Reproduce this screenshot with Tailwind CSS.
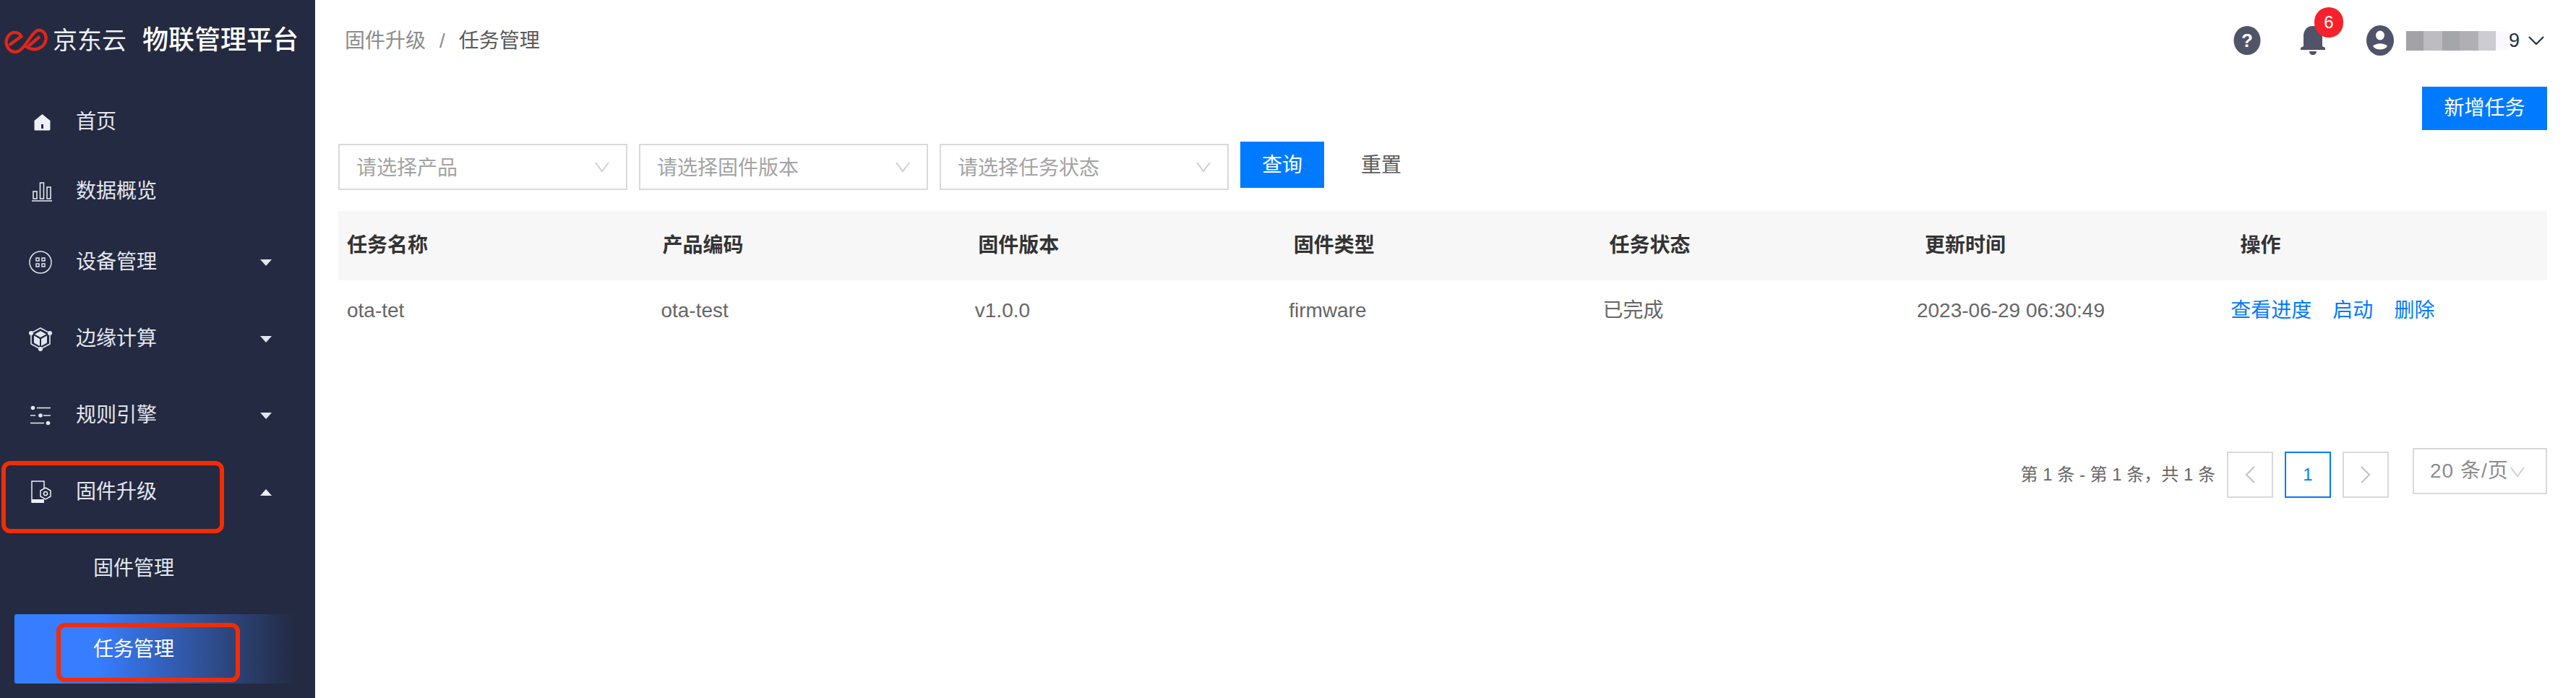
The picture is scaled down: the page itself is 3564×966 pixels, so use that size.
<!DOCTYPE html>
<html lang="zh-CN">
<head>
    <meta charset="UTF-8">
    <title>任务管理</title>
    <script src="https://cdn.jsdelivr.net/npm/@tailwindcss/browser@4"></script>
</head>
<body class="bg-white font-['Liberation_Sans','Noto_Sans_CJK_SC',sans-serif] overflow-hidden">
    <div class="flex w-[3564px] h-[966px]">
        <!-- sidebar -->
        <aside class="w-[436px] shrink-0 bg-[#232a41] text-[28px] text-[#e3e6ef]">
            <div class="flex items-center h-[112px] pl-[6px]">
                <svg width="60" height="36" viewBox="18 113 180 107" fill="none" stroke="#e1251b" stroke-width="13" class="shrink-0">
                    <path d="M38 186 L88 150 C78 128 45 125 30 155 C15 190 45 222 75 212 C105 200 120 150 150 128 C170 115 195 135 190 165 C185 195 150 212 120 198 L105 190"/>
                    <path d="M118 190 L165 150"/>
                </svg>
                <span class="ml-[7px] text-[34px] leading-none text-[#eef0f4]">京东云</span>
                <span class="ml-[22px] text-[36px] leading-none font-medium text-white">物联管理平台</span>
            </div>
            <nav class="mt-[9px]">
                <a class="flex items-center h-[96px]">
                    <svg class="ml-[47px] w-[23px] h-[23px]" viewBox="0 0 23 23"><path fill="#eef0f7" d="M11.5 0 L22.5 9 V21 a1.5 1.5 0 0 1 -1.5 1.5 H2 a1.5 1.5 0 0 1 -1.5 -1.5 V9 Z"/><rect x="10" y="14" width="3" height="6" fill="#232a41"/></svg>
                    <span class="ml-[35px]">首页</span>
                </a>
                <a class="flex items-center h-[96px]">
                    <svg class="ml-[44px] w-[28px] h-[28px]" viewBox="0 0 28 28" fill="none" stroke="#e3e6ef" stroke-width="1.6"><rect x="2" y="14" width="5" height="10"/><rect x="11.500" y="2" width="5" height="22"/><rect x="21" y="8" width="5" height="16"/><path d="M0 27 H28"/></svg>
                    <span class="ml-[33px]">数据概览</span>
                </a>
                <a class="flex items-center h-[96px] mt-[2px]">
                    <svg class="ml-[40px] w-[32px] h-[32px]" viewBox="0 0 32 32" fill="none" stroke="#e3e6ef" stroke-width="1.5"><circle cx="16" cy="16" r="15"/><rect x="10" y="10" width="4" height="4"/><rect x="18" y="10" width="4" height="4"/><rect x="10" y="18" width="4" height="4"/><rect x="18" y="18" width="4" height="4"/></svg>
                    <span class="ml-[33px]">设备管理</span>
                    <svg class="ml-[143px] w-[16px] h-[9px]" viewBox="0 0 16 9"><path fill="#e3e6ef" d="M0 0 H16 L8 9 Z"/></svg>
                </a>
                <a class="flex items-center h-[96px] mt-[10px]">
                    <svg class="ml-[40px] w-[32px] h-[34px]" viewBox="0 0 32 34" fill="none" stroke="#e3e6ef" stroke-width="1.6"><path d="M16 2 L29 9 V24 L16 31 L3 24 V9 Z"/><path fill="#e3e6ef" stroke="none" d="M16 6 L24 10.500 L16 15 L8 10.500 Z"/><path fill="#e3e6ef" stroke="none" d="M7 12.500 L15 17 V27 L7 22.500 Z M25 12.500 L17 17 V27 L25 22.500 Z"/><circle cx="16" cy="31" r="2.300" fill="#e3e6ef"/><circle cx="3" cy="9" r="2.300" fill="#e3e6ef"/><circle cx="29" cy="9" r="2.300" fill="#e3e6ef"/></svg>
                    <span class="ml-[33px]">边缘计算</span>
                    <svg class="ml-[143px] w-[16px] h-[9px]" viewBox="0 0 16 9"><path fill="#e3e6ef" d="M0 0 H16 L8 9 Z"/></svg>
                </a>
                <a class="flex items-center h-[96px] mt-[10px]">
                    <svg class="ml-[42px] w-[28px] h-[28px]" viewBox="0 0 28 28" fill="none" stroke="#e3e6ef" stroke-width="1.6"><circle cx="3.500" cy="3.500" r="2.800" fill="#e3e6ef" stroke="none"/><path d="M9 3.500 H28"/><path d="M0 14 H7 M18 14 H28"/><circle cx="14" cy="14" r="2.800" fill="#e3e6ef" stroke="none"/><path d="M0 24.500 H19"/><circle cx="24.500" cy="24.500" r="2.800" fill="#e3e6ef" stroke="none"/></svg>
                    <span class="ml-[35px]">规则引擎</span>
                    <svg class="ml-[143px] w-[16px] h-[9px]" viewBox="0 0 16 9"><path fill="#e3e6ef" d="M0 0 H16 L8 9 Z"/></svg>
                </a>
                <a class="relative flex items-center h-[96px] mt-[10px]">
                    <svg class="ml-[43px] w-[29px] h-[32px]" viewBox="0 0 29 32" fill="none" stroke="#eef0f7" stroke-width="1.500"><path d="M18 14 V1 H1 V30 H18"/><rect x="1" y="26" width="17" height="5" fill="#eef0f7" stroke="none"/><path fill="#232a41" d="M20 10 L27 14 V22 L20 26 L13 22 V14 Z"/><circle cx="20" cy="18" r="2.600"/></svg>
                    <span class="ml-[33px]">固件升级</span>
                    <svg class="ml-[143px] w-[16px] h-[9px]" viewBox="0 0 16 9"><path fill="#eef0f7" d="M0 9 H16 L8 0 Z"/></svg>
                    <div class="absolute left-[2px] top-[5px] w-[308px] h-[100px] rounded-[12px] border-[6px] border-[#f62b00]"></div>
                </a>
                <a class="flex items-center h-[96px] mt-[10px] pl-[129px]">固件管理</a>
                <a class="relative flex items-center h-[96px] mt-[15px] ml-[20px] w-[390px] pl-[109px] pt-[2px] rounded-[3px] text-white bg-gradient-to-r from-[#377dff] from-[30%] to-[#232a41]">
                    任务管理
                    <div class="absolute left-[58px] top-[12px] w-[254px] h-[82px] rounded-[12px] border-[6px] border-[#f62b00]"></div>
                </a>
            </nav>
        </aside>

        <!-- content -->
        <main class="flex-1 min-w-0 pl-[32px] pr-[40px] text-[28px] text-[#666]">
            <header class="flex items-center h-[112px]">
                <div class="flex items-center pl-[9px] pt-[2px]">
                    <span class="text-[#8c8c8c]">固件升级</span>
                    <span class="mx-[19px] text-[#8c8c8c]">/</span>
                    <span class="text-[#595959]">任务管理</span>
                </div>
                <div class="ml-auto flex items-center">
                    <svg class="w-[38px] h-[40px]" viewBox="0 0 38 40"><ellipse cx="19" cy="20" rx="18.500" ry="20" fill="#4f5468"/><text x="19" y="29" text-anchor="middle" font-size="26" font-weight="700" fill="#fff">?</text></svg>
                    <div class="relative ml-[54px] w-[36px] h-[40px]">
                        <svg class="w-[36px] h-[40px]" viewBox="0 0 36 40"><path fill="#4f5468" d="M18 0 C8 0 5 8 5 14 V28 L1 30 V33 H35 V30 L31 28 V14 C31 8 28 0 18 0 Z"/><path fill="#4f5468" d="M13 35 H23 C23 42 13 42 13 35 Z"/></svg>
                        <span class="absolute left-[20px] top-[-26px] w-[40px] h-[42px] rounded-full bg-[#f5222d] text-white text-[24px] flex items-center justify-center">6</span>
                    </div>
                    <svg class="ml-[56px] w-[38px] h-[42px]" viewBox="0 0 38 42"><ellipse cx="19" cy="21" rx="19" ry="21" fill="#4f5468"/><ellipse cx="19" cy="14" rx="6" ry="6.500" fill="#fff"/><path fill="#fff" d="M9 29 C13 24 25 24 29 29 C25 35 13 35 9 29 Z"/></svg>
                    <div class="ml-[17px] flex h-[27px]">
                        <div class="w-[24px] bg-[#a3a2a6]"></div>
                        <div class="w-[26px] bg-[#bdbdc1]"></div>
                        <div class="w-[24px] bg-[#a5a6aa]"></div>
                        <div class="w-[26px] bg-[#b0afb3]"></div>
                        <div class="w-[24px] bg-[#cdccd2]"></div>
                        <div class="w-[18px] bg-[#f9f9ff]"></div>
                    </div>
                    <span class="text-[#262f45] text-[27px] leading-none">9</span>
                    <svg class="ml-[12px] mr-[4px] w-[22px] h-[12px]" viewBox="0 0 22 12" fill="none" stroke="#262f45" stroke-width="2.200"><path d="M1 1 L11 11 L21 1"/></svg>
                </div>
            </header>

            <div class="flex justify-end mt-[8px]">
                <button class="w-[173px] h-[60px] bg-[#007aff] text-white text-[28px]">新增任务</button>
            </div>

            <div class="flex items-start mt-[16px] h-[68px]">
                <div class="flex items-center justify-between mt-[3px] w-[400px] h-[64px] px-[23px] border-2 border-[#d9d9d9] text-[#a3a3a3]">
                    <span class="mt-[3px]">请选择产品</span>
                    <svg class="w-[20px] h-[15px]" viewBox="0 0 20 15" fill="none" stroke="#cfcfcf" stroke-width="2"><path d="M1 1 L10 13 L19 1"/></svg>
                </div>
                <div class="flex items-center justify-between mt-[3px] ml-[16px] w-[400px] h-[64px] px-[23px] border-2 border-[#d9d9d9] text-[#a3a3a3]">
                    <span class="mt-[3px]">请选择固件版本</span>
                    <svg class="w-[20px] h-[15px]" viewBox="0 0 20 15" fill="none" stroke="#cfcfcf" stroke-width="2"><path d="M1 1 L10 13 L19 1"/></svg>
                </div>
                <div class="flex items-center justify-between mt-[3px] ml-[16px] w-[400px] h-[64px] px-[23px] border-2 border-[#d9d9d9] text-[#a3a3a3]">
                    <span class="mt-[3px]">请选择任务状态</span>
                    <svg class="w-[20px] h-[15px]" viewBox="0 0 20 15" fill="none" stroke="#cfcfcf" stroke-width="2"><path d="M1 1 L10 13 L19 1"/></svg>
                </div>
                <button class="ml-[16px] w-[116px] h-[64px] pt-[2px] bg-[#007aff] text-white">查询</button>
                <button class="ml-[51px] h-[64px] pt-[2px] text-[#595959]">重置</button>
            </div>

            <div class="mt-[28px]">
                <div class="grid grid-cols-[repeat(7,436.6px)] items-center h-[96px] pl-[12px] bg-[#f7f7f7] font-bold text-[#333]">
                    <div>任务名称</div>
                    <div>产品编码</div>
                    <div>固件版本</div>
                    <div>固件类型</div>
                    <div>任务状态</div>
                    <div>更新时间</div>
                    <div>操作</div>
                </div>
                <div class="grid grid-cols-[repeat(7,434.4px)] items-center h-[84px] pl-[12px]">
                    <div>ota-tet</div>
                    <div>ota-test</div>
                    <div>v1.0.0</div>
                    <div>firmware</div>
                    <div>已完成</div>
                    <div>2023-06-29 06:30:49</div>
                    <div class="flex gap-[29px] text-[#007aff]"><a>查看进度</a><a>启动</a><a>删除</a></div>
                </div>
            </div>

            <div class="flex justify-end items-start mt-[148px]">
                <span class="self-center mt-[4px] text-[24px] text-[#666]">第 1 条 - 第 1 条，共 1 条</span>
                <div class="flex items-center justify-center ml-[16px] mt-[5px] w-[64px] h-[64px] border-2 border-[#d9d9d9]">
                    <svg class="w-[14px] h-[24px]" viewBox="0 0 14 24" fill="none" stroke="#c4c4c4" stroke-width="2.200"><path d="M13 1 L2 12 L13 23"/></svg>
                </div>
                <div class="flex items-center justify-center ml-[16px] mt-[5px] w-[64px] h-[64px] border-2 border-[#007aff] text-[#007aff] text-[24px]">1</div>
                <div class="flex items-center justify-center ml-[16px] mt-[5px] w-[64px] h-[64px] border-2 border-[#d9d9d9]">
                    <svg class="w-[14px] h-[24px]" viewBox="0 0 14 24" fill="none" stroke="#c4c4c4" stroke-width="2.200"><path d="M1 1 L12 12 L1 23"/></svg>
                </div>
                <div class="flex items-center ml-[33px] w-[186px] h-[64px] pl-[22px] border-2 border-[#d9d9d9] text-[#8c8c8c] tracking-[1px]">
                    20 条/页
                    <svg class="ml-[2px] mt-[3px] w-[20px] h-[15px]" viewBox="0 0 20 15" fill="none" stroke="#cfcfcf" stroke-width="2"><path d="M1 1 L10 13 L19 1"/></svg>
                </div>
            </div>
        </main>
    </div>
</body>
</html>
